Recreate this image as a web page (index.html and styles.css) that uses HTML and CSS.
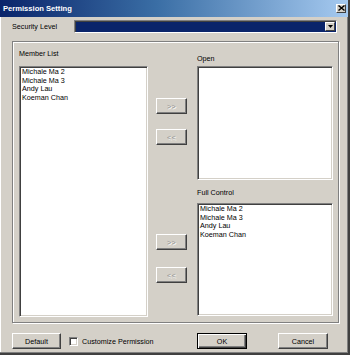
FILE: index.html
```html
<!DOCTYPE html>
<html lang="en">
<head>
    <meta charset="UTF-8" />
    <title>Permission Setting</title>
    <link rel="stylesheet" href="styles.css">
</head>
<body>
<div class="window">
    <div class="titlebar">
        <span class="title">Permission Setting</span>
        <span class="close-btn">
            <svg width="7" height="6" viewBox="0 0 7 6"><path d="M0.5 0.5 L6.5 5.5 M6.5 0.5 L0.5 5.5" stroke="#000" stroke-width="1.4"/></svg>
        </span>
    </div>

    <div class="dialog">
        <div class="security-row">
            <label class="security-label">Security Level</label>
            <div class="combo">
                <div class="combo-value"></div>
                <span class="combo-arrow">
                    <svg width="5" height="3" viewBox="0 0 5 3"><path d="M0 0 H5 L2.5 3 Z" fill="#000"/></svg>
                </span>
            </div>
        </div>

        <div class="group">
            <div class="col-left">
                <div class="caption caption-member">Member List</div>
                <ul class="listbox member-list">
                    <li>Michale Ma 2</li>
                    <li>Michale Ma 3</li>
                    <li>Andy Lau</li>
                    <li>Koeman Chan</li>
                </ul>
            </div>

            <div class="col-mid">
                <button class="btn btn-move btn-1" disabled>&gt;&gt;</button>
                <button class="btn btn-move btn-2" disabled>&lt;&lt;</button>
                <button class="btn btn-move btn-3" disabled>&gt;&gt;</button>
                <button class="btn btn-move btn-4" disabled>&lt;&lt;</button>
            </div>

            <div class="col-right">
                <div class="caption caption-open">Open</div>
                <ul class="listbox open-list"></ul>
                <div class="caption caption-full">Full Control</div>
                <ul class="listbox full-list">
                    <li>Michale Ma 2</li>
                    <li>Michale Ma 3</li>
                    <li>Andy Lau</li>
                    <li>Koeman Chan</li>
                </ul>
            </div>
        </div>

        <div class="footer">
            <button class="btn btn-default">Default</button>
            <label class="check">
                <span class="checkbox"></span>
                Customize Permission
            </label>
            <button class="btn btn-ok">OK</button>
            <button class="btn btn-cancel">Cancel</button>
        </div>
    </div>
</div>
</body>
</html>
```

FILE: styles.css
```css
body {
    margin: 0;
    font-family: "Liberation Sans", Arial, sans-serif;
    font-size: 7.2px;
    color: #000;
    background: #d4d0c8;
}

.window {
    width: 350px;
    height: 355px;
    box-sizing: border-box;
    background: #d4d0c8;
    border-right: 2px solid #404040;
    border-bottom: 2px solid #404040;
    box-shadow: inset -1px -1px #808080, inset 1px 1px #fff;
    overflow: hidden;
}

.titlebar {
    height: 17px;
    display: flex;
    align-items: center;
    justify-content: space-between;
    padding: 0 2px 0 3px;
    background: linear-gradient(90deg, #0a246a 0%, #3a6ea5 45%, #a6caf0 100%);
}

.title {
    color: #fff;
    font-weight: bold;
    font-size: 7.6px;
}

.close-btn {
    width: 10px;
    height: 9px;
    box-sizing: border-box;
    display: flex;
    align-items: center;
    justify-content: center;
    background: #d4d0c8;
    border-top: 1px solid #fff;
    border-left: 1px solid #fff;
    border-right: 1px solid #404040;
    border-bottom: 1px solid #404040;
    margin-top: -1px;
}

.dialog {
    padding: 0 9px 0 12px;
}

.security-row {
    display: flex;
    align-items: center;
    margin-top: 3px;
    height: 13px;
}

.security-label {
    width: 62px;
}

.combo {
    width: 263px;
    height: 13px;
    box-sizing: border-box;
    display: flex;
    align-items: center;
    background: #0a246a;
    border-top: 1px solid #808080;
    border-left: 1px solid #808080;
    border-right: 1px solid #fff;
    border-bottom: 1px solid #fff;
    box-shadow: inset 1px 1px #404040;
    padding: 1px 1px 1px 2px;
}

.combo-value {
    flex: 1;
}

.combo-arrow {
    width: 10px;
    height: 9px;
    box-sizing: border-box;
    display: flex;
    align-items: center;
    justify-content: center;
    background: #d4d0c8;
    border-top: 1px solid #fff;
    border-left: 1px solid #fff;
    border-right: 1px solid #404040;
    border-bottom: 1px solid #404040;
}

.group {
    margin-top: 8px;
    width: 327px;
    height: 282px;
    box-sizing: border-box;
    border: 1px solid #808080;
    box-shadow: 1px 1px #fff, inset 1px 1px #fff;
    display: flex;
    padding-left: 6px;
}

.caption {
    height: 9px;
    line-height: 9px;
}

.caption-member {
    padding-top: 7px;
    padding-bottom: 8px;
}

.caption-open {
    padding-top: 12px;
    padding-bottom: 3px;
}

.caption-full {
    padding-top: 8px;
    padding-bottom: 6px;
}

.listbox {
    list-style: none;
    margin: 0;
    padding: 1px 1px 0 2px;
    box-sizing: border-box;
    background: #fff;
    border-top: 1px solid #808080;
    border-left: 1px solid #808080;
    border-right: 1px solid #fff;
    border-bottom: 1px solid #fff;
    box-shadow: inset 1px 1px #404040, inset -1px -1px #d4d0c8;
}

.listbox li {
    height: 8.7px;
    line-height: 8.7px;
    white-space: nowrap;
}

.member-list {
    width: 129px;
    height: 251px;
}

.col-mid {
    width: 31px;
    margin-left: 8px;
    display: flex;
    flex-direction: column;
}

.col-right {
    margin-left: 10px;
    width: 136px;
}

.open-list {
    height: 114px;
}

.full-list {
    height: 113px;
}

.btn {
    font-family: inherit;
    font-size: 7.2px;
    height: 16px;
    padding: 0;
    box-sizing: border-box;
    background: #d4d0c8;
    color: #000;
    border-top: 1px solid #fff;
    border-left: 1px solid #fff;
    border-right: 1px solid #404040;
    border-bottom: 1px solid #404040;
    box-shadow: inset -1px -1px #808080;
}

.btn-move {
    width: 31px;
    color: #909090;
    text-shadow: 1px 1px #fff;
    font-size: 7px;
    letter-spacing: 0.5px;
}

.btn-1 { margin-top: 56px; }
.btn-2 { margin-top: 15px; }
.btn-3 { margin-top: 89px; }
.btn-4 { margin-top: 17px; }

.footer {
    display: flex;
    align-items: center;
    margin-top: 10px;
    height: 16px;
}

.btn-default {
    width: 49px;
}

.check {
    display: flex;
    align-items: center;
    margin-left: 8px;
}

.checkbox {
    width: 9px;
    height: 9px;
    box-sizing: border-box;
    background: #fff;
    border-top: 1px solid #808080;
    border-left: 1px solid #808080;
    border-right: 1px solid #fff;
    border-bottom: 1px solid #fff;
    box-shadow: inset 1px 1px #404040, inset -1px -1px #d4d0c8;
    margin-right: 4px;
}

.btn-ok {
    width: 50px;
    margin-left: auto;
    border: 1px solid #000;
    box-shadow: inset 1px 1px #fff, inset -1px -1px #404040, inset -2px -2px #808080;
}

.btn-cancel {
    width: 50px;
    margin-left: 31px;
    margin-right: 11px;
}
```
